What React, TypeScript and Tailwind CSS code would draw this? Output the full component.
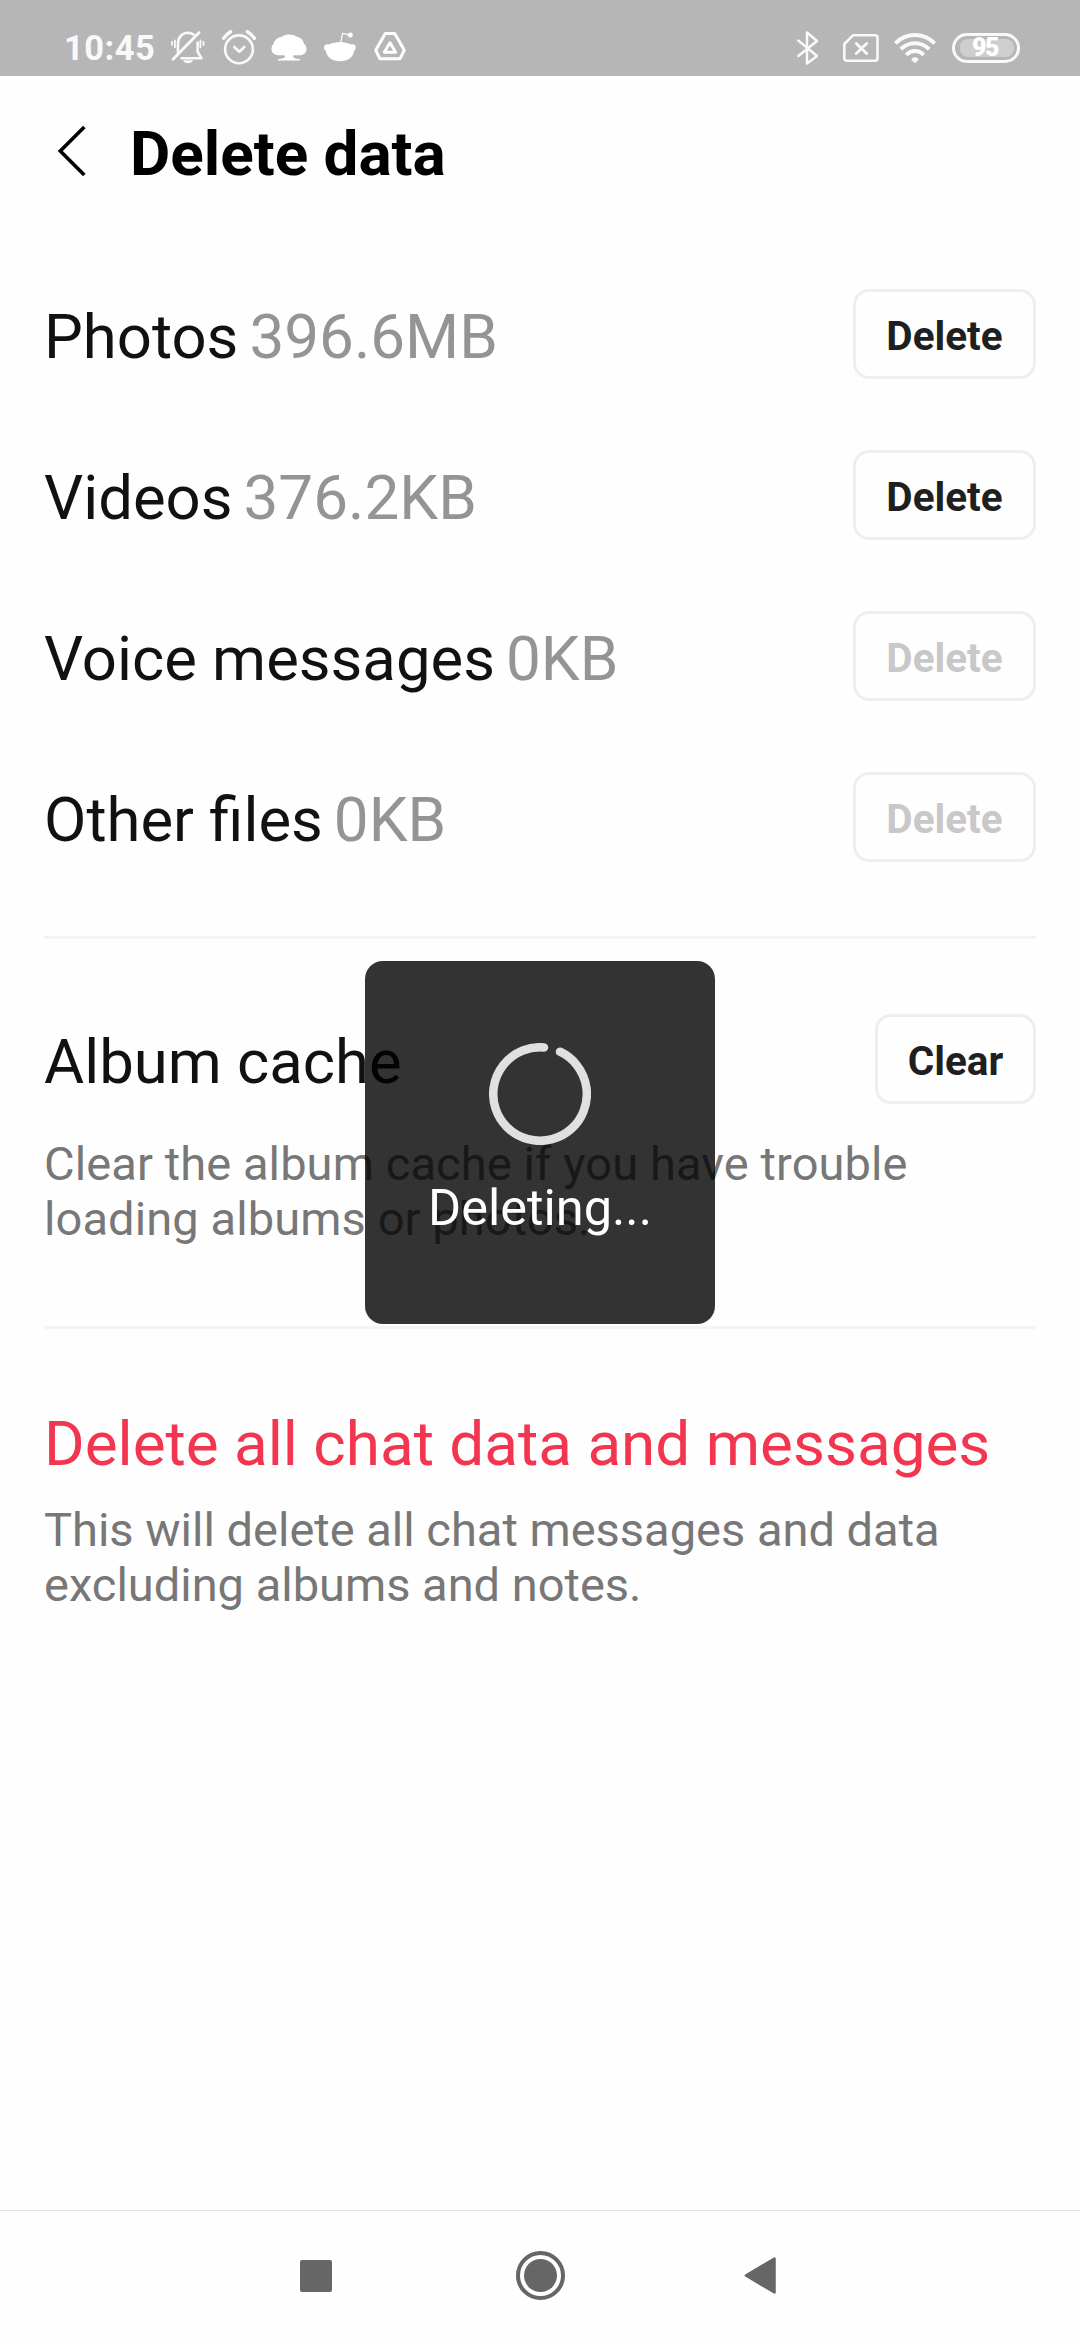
type StorageItem = { name: string; size: string; empty?: boolean };

const items: StorageItem[] = [
  { name: "Photos", size: "396.6MB" },
  { name: "Videos", size: "376.2KB" },
  { name: "Voice messages", size: "0KB", empty: true },
  { name: "Other files", size: "0KB", empty: true },
];

function MutedBell() {
  return (
    <svg width="36" height="36" viewBox="0 0 36 36" fill="none" stroke="#f9f9f9" strokeWidth="2.6" strokeLinecap="round" strokeLinejoin="round">
      <path d="M8 23.5V13.5C8.3 7 12.500 2.900 17.500 2.700C19.800 2.700 21.800 3.200 23.600 4.600" />
      <path d="M27.600 12.500V21.500L31.500 28.300H11.500" />
      <path d="M3 29.300L29.200 2.500" strokeWidth="2.800" />
      <path d="M2 12V15M4.900 10.500V17.300M30.400 10.500V17.300M33.500 12V15" strokeWidth="1.800" />
      <path d="M13 30.300H23C21.800 34.200 14.200 34.200 13 30.300Z" fill="#f9f9f9" stroke="none" />
    </svg>
  );
}

function AlarmClock() {
  return (
    <svg width="36" height="36" viewBox="0 0 36 36" fill="none" stroke="#f9f9f9" strokeLinecap="round" strokeLinejoin="round">
      <circle cx="18" cy="19.300" r="13.900" strokeWidth="2.600" />
      <path d="M13.300 17L18.300 21.700L23.300 17" strokeWidth="2.700" />
      <path d="M2.600 8.300C4.600 5.300 6.700 3.400 9.600 1.700M33.400 8.300C31.400 5.300 29.300 3.400 26.400 1.700" strokeWidth="3.400" />
    </svg>
  );
}

function Tree() {
  return (
    <svg width="36" height="28" viewBox="0 0 36 28" fill="#fff">
      <path d="M8 21.300C3.500 21.300 .5 18.700 .5 15.300C.5 12.800 1.200 11 2.700 9.700C3.300 6.300 6.500 3.700 10.200 3C12.500 1.300 15 .5 18 .5C21 .5 23.800 1.300 25.500 2.800C29.500 3.300 32.300 6.200 33 9.700C34.800 11 35.500 13 35.500 15.500C35.500 18.800 32.500 21.300 28.500 21.300H22.700C21.500 22.500 22 23.700 24.500 24.400L29 25.300V26.500H7V25.300L11.700 24.400C14.200 23.700 14.600 22.500 13.300 21.300Z" />
    </svg>
  );
}

function RedditMark() {
  return (
    <svg width="34" height="32" viewBox="0 0 34 32" fill="#fff">
      <path d="M5.500 12.600C9 10.700 13 9.900 17 9.900C21 9.900 25 10.700 28.300 12.600C30.500 11.500 33 13.200 32.800 15.700C32.700 17.100 32 18.200 31 18.900C30.500 25 24.500 29.200 17 29.200C9.500 29.200 3.500 25 3 18.900C1.800 18.200 1 17.100 1 15.700C1 13.200 3.300 11.500 5.500 12.600Z" />
      <path d="M17.800 10.500L19.500 1.500L26 2.800" fill="none" stroke="#fff" strokeWidth="1.200" />
      <circle cx="27.300" cy="3" r="2.500" />
    </svg>
  );
}

function DriveMark() {
  return (
    <svg width="34" height="32" viewBox="0 0 34 32" fill="none" stroke="#fff" strokeWidth="3" strokeLinejoin="round">
      <path d="M12.300 2.500H21.700L31.300 19.200L27 27.800H7L2.700 19.200Z" />
      <path d="M17 11.800L22.700 21.300H11.300Z" strokeWidth="2.900" />
    </svg>
  );
}

function StatusBar() {
  return (
    <div className="flex h-[76px] shrink-0 justify-between bg-[#b6b6b6] pl-[64px] pr-[60px] pt-[30px]">
      <div className="flex">
        <span className="w-[106px] text-[34.5px] font-bold leading-[36px] tracking-[0.5px] text-[#f9f9f9]">10:45</span>
        <MutedBell />
        <div className="ml-[15px]"><AlarmClock /></div>
        <div className="ml-[14px] mt-[4px]"><Tree /></div>
        <div className="ml-[16px] mt-[2px]"><RedditMark /></div>
        <div className="ml-[16px] mt-[1px]"><DriveMark /></div>
      </div>
      <div className="flex">
        <svg width="24" height="36" viewBox="0 0 24 36" fill="none" stroke="#f9f9f9" strokeWidth="2.500" strokeLinejoin="round" strokeLinecap="round">
          <path d="M2.300 10.500L21 26L11 33.500V2.500L21 11L2.300 26" />
        </svg>
        <svg className="ml-[22px] mt-[3px]" width="38" height="30" viewBox="0 0 38 30" fill="none" stroke="#f9f9f9" strokeLinecap="round" strokeLinejoin="round">
          <path d="M11 2.300H33C34.500 2.300 35.500 3.200 35.500 4.500V25.500C35.500 27 34.500 27.700 33 27.700H5C3.500 27.700 2.300 27 2.300 25.500V11Z" strokeWidth="2.600" />
          <path d="M14.300 10.500L24.700 20.500M24.700 10.500L14.300 20.500" strokeWidth="2.900" />
        </svg>
        <svg className="ml-[13px] mt-[2px]" width="44" height="32" viewBox="0 0 44 32" fill="none" stroke="#f9f9f9" strokeWidth="3.900">
          <path d="M2.300 11.300C13.500 .3 30.500 .3 41.700 11.300" />
          <path d="M7.800 17.200C16 9.200 28 9.200 36.200 17.200" />
          <path d="M13.200 22.800C18.500 17.800 25.500 17.800 30.800 22.800" />
          <path d="M18.200 27.500C20 24.600 24 24.600 25.800 27.500L22 31.300Z" fill="#f9f9f9" stroke="none" />
        </svg>
        <div className="ml-[15px] mt-[3px] h-[30px] w-[68px] rounded-full border-[3px] border-[#f9f9f9] px-[5px] py-[3px]">
          <div className="flex h-full w-[54px] items-center justify-center rounded-[8px] bg-[#cecece] pr-[4px] text-[25px] font-black leading-[18px] tracking-[-1.5px] text-white">
            95
          </div>
        </div>
      </div>
    </div>
  );
}

function ActionButton({ label, disabled }: { label: string; disabled?: boolean }) {
  return (
    <button
      disabled={disabled}
      className={`h-[90px] rounded-[16px] border-[3px] border-[#eeeeee] pt-[5px] text-center text-[40.5px] font-bold leading-[79px] ${label === "Clear" ? "w-[161px]" : "w-[183px]"} ${disabled ? "text-[#c8c8c8]" : "text-[#1f1f1f]"}`}
    >
      {label}
    </button>
  );
}

function LoadingToast() {
  return (
    <div className="absolute left-[365px] top-[961px] flex h-[363px] w-[350px] flex-col items-center rounded-[18px] bg-black/80 pt-[82px]">
      <svg width="102" height="102" viewBox="0 0 102 102" fill="none" stroke="#e0e0e0" strokeWidth="8.500" strokeLinecap="round">
        <path d="M71 8.700A46.800 46.800 0 1 1 55 4.400" />
      </svg>
      <p className="mt-[33px] text-[50.5px] leading-[60px] text-white">Deleting...</p>
    </div>
  );
}

function NavigationBar() {
  return (
    <nav className="mt-auto flex h-[130px] shrink-0 items-center border-t border-[#e2e2e2] pl-[300px]">
      <div className="h-[32px] w-[32px] rounded-[2px] bg-[#666666]" />
      <svg className="ml-[184px]" width="49" height="49" viewBox="0 0 49 49" fill="#666666">
        <circle cx="24.500" cy="24.500" r="22.500" fill="none" stroke="#666666" strokeWidth="4" />
        <circle cx="24.500" cy="24.500" r="16.500" />
      </svg>
      <svg className="ml-[179px]" width="32" height="37" viewBox="0 0 32 37" fill="#666666" stroke="#666666" strokeWidth="2.500" strokeLinejoin="round">
        <path d="M30.500 1.600V35.400L1.800 18.500Z" />
      </svg>
    </nav>
  );
}

export default function App() {
  return (
    <div className="relative flex h-[2340px] w-[1080px] flex-col overflow-hidden bg-[#fefefe] font-[Roboto,sans-serif]">
      <StatusBar />
      <header className="flex h-[154px] shrink-0 items-center pl-[57px]">
        <svg className="-mt-[5px]" width="30" height="52" viewBox="0 0 30 52" fill="none" stroke="#000" strokeWidth="3.600">
          <path d="M27.300 2L3.300 26L27.300 50" />
        </svg>
        <h1 className="ml-[43px] pt-[1px] text-[62px] font-bold leading-[72px] text-black">Delete data</h1>
      </header>
      <main className="flex flex-col pl-[44px] pr-[44px] pt-[59px]">
        {items.map((item) => (
          <div key={item.name} className="flex h-[161px] items-start justify-between">
            <p className="flex gap-[11px] pt-[3px] leading-[90px]">
              <span className="text-[61.6px] text-[#111111]">{item.name}</span>
              <span className="text-[62px] text-[#949494]">{item.size}</span>
            </p>
            <ActionButton label="Delete" disabled={item.empty} />
          </div>
        ))}
        <section className="mt-[3px] h-[390px] border-t-[3px] border-[#f4f4f4]">
          <div className="flex items-start justify-between pt-[75px]">
            <h2 className="pt-[3px] text-[61.6px] leading-[90px] text-[#111111]">Album cache</h2>
            <ActionButton label="Clear" />
          </div>
          <p className="mt-[29px] w-[900px] text-[47px] leading-[55px] tracking-[0.1px] text-[#777777]">
            Clear the album cache if you have trouble loading albums or photos.
          </p>
        </section>
        <section className="border-t-[3px] border-[#f4f4f4] pt-[80px]">
          <h2 className="text-[62px] leading-[70px] text-[#f2364f]">Delete all chat data and messages</h2>
          <p className="mt-[23px] w-[930px] text-[47px] leading-[55px] text-[#777777]">
            This will delete all chat messages and data excluding albums and notes.
          </p>
        </section>
      </main>
      <NavigationBar />
      <LoadingToast />
    </div>
  );
}
